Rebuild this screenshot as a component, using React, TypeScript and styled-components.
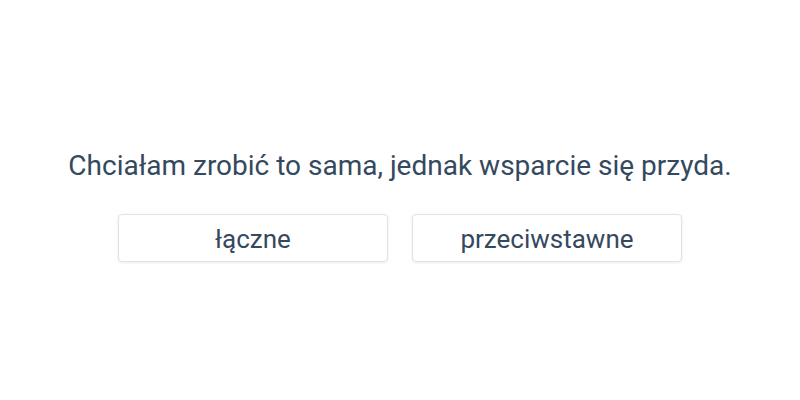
import styled, { createGlobalStyle } from "styled-components";

const GlobalStyle = createGlobalStyle`
  html, body {
    margin: 0;
    padding: 0;
    background: #ffffff;
  }
  body {
    font-family: Roboto, "Liberation Sans", sans-serif;
  }
`;

const Screen = styled.main`
  width: 800px;
  height: 400px;
  display: flex;
  flex-direction: column;
  align-items: center;
  justify-content: center;
  padding-top: 11px;
  box-sizing: border-box;
`;

const Sentence = styled.p`
  margin: 0 0 31px;
  font-size: 28px;
  line-height: 34px;
  color: #34495e;
  text-align: center;
`;

const Choices = styled.div`
  display: grid;
  grid-template-columns: repeat(2, 270px);
  gap: 24px;
`;

const Choice = styled.button`
  height: 48px;
  background: #ffffff;
  border: 1px solid #e3e3e3;
  border-radius: 4px;
  box-shadow: 0 1px 3px rgba(0, 0, 0, 0.08);
  font-family: Roboto, "Liberation Sans", sans-serif;
  font-size: 26px;
  color: #34495e;
  cursor: pointer;
  padding: 2px 12px 0;
`;

const options = ["łączne", "przeciwstawne"];

const App = () => {
  return (
    <>
      <GlobalStyle />
      <Screen>
        <Sentence>Chciałam zrobić to sama, jednak wsparcie się przyda.</Sentence>
        <Choices>
          {options.map((opt) => (
            <Choice key={opt}>{opt}</Choice>
          ))}
        </Choices>
      </Screen>
    </>
  );
};

export default App;
